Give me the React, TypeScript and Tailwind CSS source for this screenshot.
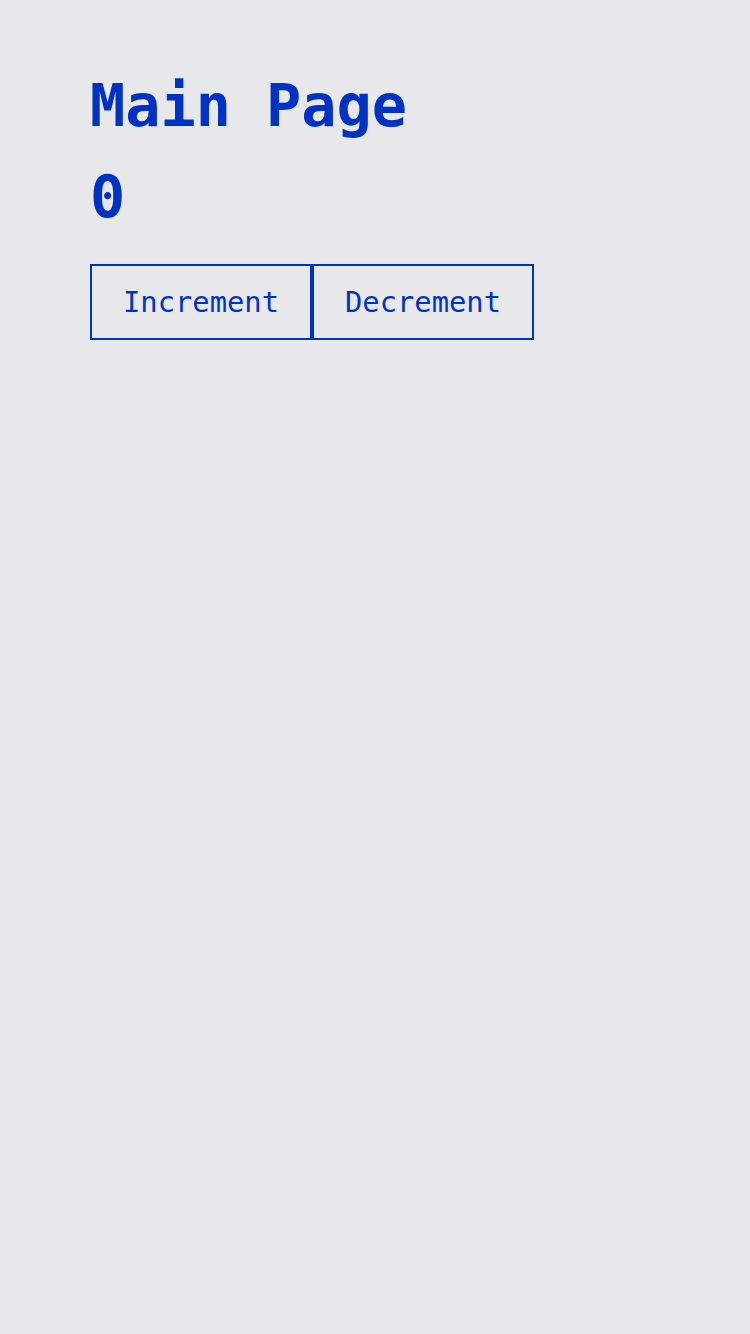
import React, { useState } from "react";

export default function App() {
  const [count, setCount] = useState(0);
  return (
    <div className="min-h-[1334px] w-full bg-[#e8e8ea] pl-[90px] pt-[61px] text-[#0033c4]" style={{ fontFamily: '"DejaVu Sans Mono", monospace' }}>
      <h1 className="m-0 text-[58.5px] font-bold leading-[91px]">Main Page</h1>
      <div className="text-[58.5px] font-bold leading-[91px]">{count}</div>
      <div className="mt-[21px] flex">
        <button
          className="h-[76px] w-[222px] border-2 border-[#0033c4] bg-transparent text-center text-[28.8px] leading-[72px] text-[#0033c4]"
          onClick={() => setCount(count + 1)}
        >
          Increment
        </button>
        <button
          className="h-[76px] w-[222px] border-2 border-[#0033c4] bg-transparent text-center text-[28.8px] leading-[72px] text-[#0033c4]"
          onClick={() => setCount(count - 1)}
        >
          Decrement
        </button>
      </div>
    </div>
  );
}
